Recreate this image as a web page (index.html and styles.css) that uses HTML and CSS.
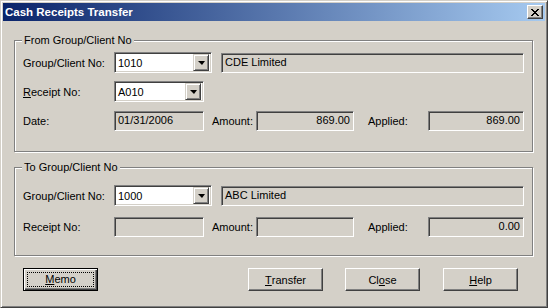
FILE: index.html
```html
<!DOCTYPE html>
<html>
<head>
<title>Cash Receipts Transfer</title>
<link rel="stylesheet" href="styles.css">
</head>
<body>

<div class="wnd">
<div class="ttl">
<span class="ttl_txt">Cash Receipts Transfer</span>
<span class="ttl_x"><svg width="8" height="7" viewBox="0 0 8 7"><path d="M0 0h2v1h-2zM6 0h2v1h-2zM1 1h2v1h-2zM5 1h2v1h-2zM2 2h4v1h-4zM3 3h2v1h-2zM2 4h4v1h-4zM1 5h2v1h-2zM5 5h2v1h-2zM0 6h2v1h-2zM6 6h2v1h-2z" fill="#000"/></svg></span>
</div>

<div class="dlg">

<div class="grp grp_from">
<div class="grp_lgd">From Group/Client No</div>
<div class="row">
<div class="lbl">Group/Client No:</div>
<div class="cmb w98"><span class="val">1010</span><span class="drp"><i class="arr"></i></span></div>
<div class="fld ro w303">CDE Limited</div>
</div>
<div class="row">
<div class="lbl"><u>R</u>eceipt No:</div>
<div class="cmb w90"><span class="val">A010</span><span class="drp"><i class="arr"></i></span></div>
</div>
<div class="row">
<div class="lbl">Date:</div>
<div class="fld ro w90">01/31/2006</div>
<div class="lbl2 amt">Amount:</div>
<div class="fld ro w98 num">869.00</div>
<div class="lbl2 apl">Applied:</div>
<div class="fld ro w96 num">869.00</div>
</div>
</div>

<div class="grp grp_to">
<div class="grp_lgd">To Group/Client No</div>
<div class="row">
<div class="lbl">Group/Client No:</div>
<div class="cmb w98"><span class="val">1000</span><span class="drp"><i class="arr"></i></span></div>
<div class="fld ro w303">ABC Limited</div>
</div>
<div class="row">
<div class="lbl">Receipt No:</div>
<div class="fld ro w90"></div>
<div class="lbl2 amt">Amount:</div>
<div class="fld ro w98 num"></div>
<div class="lbl2 apl">Applied:</div>
<div class="fld ro w96 num">0.00</div>
</div>
</div>

<div class="btns">
<div class="btn btn_def"><span class="fcs"><u>M</u>emo</span></div>
<div class="btn btn_trn"><u>T</u>ransfer</div>
<div class="btn btn_cls">Cl<u>o</u>se</div>
<div class="btn btn_hlp"><u>H</u>elp</div>
</div>

</div>
</div>

</body>
</html>
```

FILE: styles.css
```css
html, body {margin:0;padding:0;}
body {width:548px;height:308px;overflow:hidden;background:#d4d0c8;font-family:"Liberation Sans", Arial, sans-serif;font-size:11px;color:#000;}

.wnd {box-sizing:border-box;width:548px;height:308px;padding:2px;border:1px solid;border-color:#d4d0c8 #404040 #404040 #d4d0c8;box-shadow:inset 1px 1px #fff, inset -1px -1px #808080;}

.ttl {height:18px;display:flex;align-items:center;justify-content:space-between;padding-left:2px;background:linear-gradient(to right, #0a246a, #a6caf0);}
.ttl_txt {color:#fff;font-weight:bold;font-size:11.5px;}
.ttl_x {box-sizing:border-box;width:16px;height:14px;margin-right:2px;display:flex;align-items:center;justify-content:center;background:#d4d0c8;border:1px solid;border-color:#fff #404040 #404040 #fff;box-shadow:inset -1px -1px #808080;}

.dlg {padding:19px 12px 0 11px;}

.grp {position:relative;border:1px solid #808080;box-shadow:inset 1px 1px #fff, 1px 1px #fff;padding-left:8px;}
.grp_from {padding-top:11px;padding-bottom:20px;}
.grp_from .row + .row {margin-top:8px;}
.grp_to {margin-top:15px;padding-top:17px;padding-bottom:18px;}
.grp_to .row + .row {margin-top:10px;}
.grp_lgd {position:absolute;top:-7px;left:7px;padding:0 2px;background:#d4d0c8;line-height:13px;}

.row {display:flex;align-items:center;height:21px;}
.lbl {width:91px;}
.lbl2.amt {margin-left:8px;width:44px;}
.lbl2.apl {margin-left:14px;width:60px;}

.fld, .cmb {box-sizing:border-box;height:20px;line-height:16px;padding:0 3px;border:1px solid;border-color:#808080 #fff #fff #808080;box-shadow:inset 1px 1px #404040, inset -1px -1px #d4d0c8;white-space:nowrap;overflow:hidden;}
.ro {background:#d4d0c8;}
.num {text-align:right;padding-right:3px;}
.cmb {height:21px;background:#fff;display:flex;align-items:center;padding:2px 2px 2px 3px;}
.cmb .val {flex:1;}
.drp {box-sizing:border-box;width:16px;height:17px;display:flex;align-items:center;justify-content:center;background:#d4d0c8;border:1px solid;border-color:#d4d0c8 #404040 #404040 #d4d0c8;box-shadow:inset 1px 1px #fff, inset -1px -1px #808080;}
.arr {width:0;height:0;border-left:4px solid transparent;border-right:3px solid transparent;border-top:4px solid #000;margin-top:1px;}

.w90 {width:90px;}
.w96 {width:96px;}
.w98 {width:98px;}
.w303 {width:303px;margin-left:9px;}

.btns {display:flex;padding-top:12px;padding-left:9px;}
.btn {box-sizing:border-box;width:75px;height:23px;display:flex;align-items:center;justify-content:center;border:1px solid;border-color:#fff #404040 #404040 #fff;box-shadow:inset -1px -1px #808080;}
.btn_def {border:1px solid #000;box-shadow:inset 1px 1px #fff, inset -1px -1px #404040, inset -2px -2px #808080;}
.btn_def .fcs {box-sizing:border-box;width:67px;height:15px;line-height:13px;text-align:center;border:1px dotted #000;}
.btn_trn {margin-left:150px;}
.btn_cls {margin-left:22px;}
.btn_hlp {margin-left:23px;}
```
